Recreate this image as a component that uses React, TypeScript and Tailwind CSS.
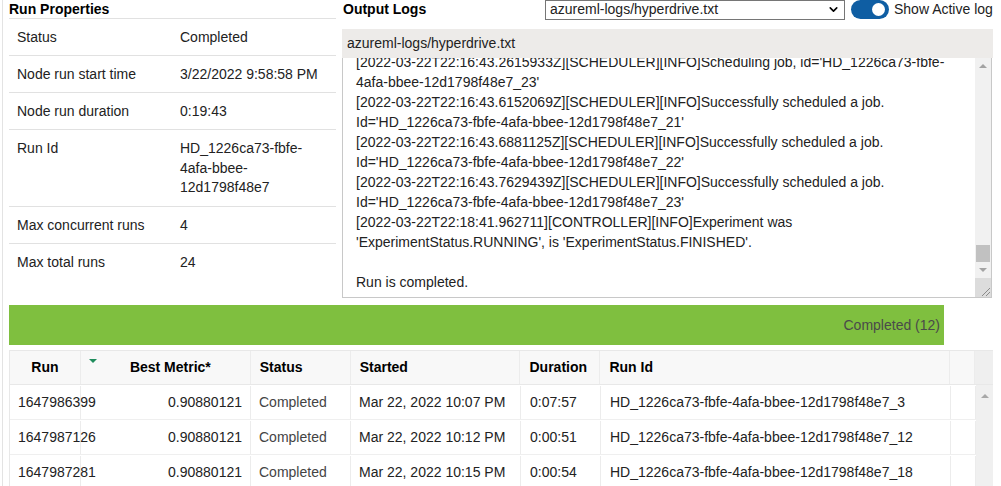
import { ChevronDown } from 'lucide-react'

const props: { label: string; value: string }[] = [
  { label: 'Status', value: 'Completed' },
  { label: 'Node run start time', value: '3/22/2022 9:58:58 PM' },
  { label: 'Node run duration', value: '0:19:43' },
  { label: 'Run Id', value: 'HD_1226ca73-fbfe-4afa-bbee-12d1798f48e7' },
  { label: 'Max concurrent runs', value: '4' },
  { label: 'Max total runs', value: '24' },
]

const logLines = [
  "[2022-03-22T22:16:43.2615933Z][SCHEDULER][INFO]Scheduling job, id='HD_1226ca73-fbfe-",
  "4afa-bbee-12d1798f48e7_23'",
  '[2022-03-22T22:16:43.6152069Z][SCHEDULER][INFO]Successfully scheduled a job.',
  "Id='HD_1226ca73-fbfe-4afa-bbee-12d1798f48e7_21'",
  '[2022-03-22T22:16:43.6881125Z][SCHEDULER][INFO]Successfully scheduled a job.',
  "Id='HD_1226ca73-fbfe-4afa-bbee-12d1798f48e7_22'",
  '[2022-03-22T22:16:43.7629439Z][SCHEDULER][INFO]Successfully scheduled a job.',
  "Id='HD_1226ca73-fbfe-4afa-bbee-12d1798f48e7_23'",
  '[2022-03-22T22:18:41.962711][CONTROLLER][INFO]Experiment was',
  "'ExperimentStatus.RUNNING', is 'ExperimentStatus.FINISHED'.",
  '',
  'Run is completed.',
]

const runs = [
  { run: '1647986399', metric: '0.90880121', status: 'Completed', started: 'Mar 22, 2022 10:07 PM', duration: '0:07:57', id: 'HD_1226ca73-fbfe-4afa-bbee-12d1798f48e7_3' },
  { run: '1647987126', metric: '0.90880121', status: 'Completed', started: 'Mar 22, 2022 10:12 PM', duration: '0:00:51', id: 'HD_1226ca73-fbfe-4afa-bbee-12d1798f48e7_12' },
  { run: '1647987281', metric: '0.90880121', status: 'Completed', started: 'Mar 22, 2022 10:15 PM', duration: '0:00:54', id: 'HD_1226ca73-fbfe-4afa-bbee-12d1798f48e7_18' },
]

function RunProperties() {
  return (
    <div className="w-[327px] shrink-0">
      <div className="h-[19px] leading-[18px] font-bold border-b border-[#e1e1e1] text-black">Run Properties</div>
      {props.map((p) => (
        <div key={p.label} className="flex pt-[9px] pb-[8px] border-b border-[#e1e1e1] last:border-b-0">
          <div className="w-[171px] shrink-0 pl-[8px] leading-[19px]">{p.label}</div>
          <div className={`w-[140px] break-words ${p.label === 'Run Id' ? 'leading-[19.5px]' : 'leading-[19px]'}`}>
            {p.value}
          </div>
        </div>
      ))}
    </div>
  )
}

function OutputLogs() {
  return (
    <div className="ml-[6px] w-[651px] shrink-0">
      {/* toolbar */}
      <div className="flex items-center h-[19px]">
        <div className="w-[203px] font-bold pl-[1px] text-black">Output Logs</div>
        <div className="w-[300px] h-[20px] border border-[#767676] flex items-center justify-between pl-[4px] pr-[4px] bg-white">
          <span>azureml-logs/hyperdrive.txt</span>
          <ChevronDown className="w-[13px] h-[13px] text-black" strokeWidth={3} />
        </div>
        <div className="ml-[6px] w-[38px] h-[19px] rounded-full bg-[#0f5ea3] flex items-center justify-end pr-[4px]">
          <div className="w-[13px] h-[13px] rounded-full bg-white" />
        </div>
        <span className="ml-[5px] whitespace-nowrap">Show Active log</span>
      </div>

      <div className="mt-[10px] h-[29px] bg-[#edebe9] pl-[5px] leading-[29px]">azureml-logs/hyperdrive.txt</div>

      {/* log box, scrolled to the end */}
      <div className="w-[650px] h-[240px] border border-[#c8c8c8] border-t-0 flex overflow-hidden bg-white">
        <div className="flex-1 overflow-hidden pl-[13px]">
          <div className="-mt-[6px]">
            {logLines.map((l, i) => (
              <div key={i} className="h-[20px] leading-[20px] whitespace-nowrap">{l || '\u00a0'}</div>
            ))}
          </div>
        </div>
        <div className="w-[16px] shrink-0 flex flex-col bg-[#f1f1f1]">
          <div className="h-[16px] flex items-center justify-center">
            <div className="w-0 h-0 border-l-[4px] border-r-[4px] border-b-[4px] border-l-transparent border-r-transparent border-b-[#a3a3a3]" />
          </div>
          <div className="flex-1" />
          <div className="h-[17px] mx-[1px] bg-[#c1c1c1]" />
          <div className="h-[16px] flex items-center justify-center">
            <div className="w-0 h-0 border-l-[4px] border-r-[4px] border-t-[4px] border-l-transparent border-r-transparent border-t-[#a3a3a3]" />
          </div>
          <div className="h-[19px] bg-[#dcdcdc] flex items-end justify-end">
            <svg width="12" height="12" viewBox="0 0 12 12">
              <path d="M11 3 L3 11 M11 7 L7 11" stroke="#8a8a8a" strokeWidth="1" />
            </svg>
          </div>
        </div>
      </div>
    </div>
  )
}

function RunsTable() {
  const cell = 'border-r border-[#ececec] flex items-center'
  return (
    <div className="mt-[5px] w-[984px] border-t border-l border-[#e8e8e8]">
      <div className="flex h-[34px] bg-[#f8f8f8] border-b border-[#e8e8e8] font-bold text-black">
        <div className={`${cell} w-[71px] justify-center`}>Run</div>
        <div className={`${cell} w-[170px] justify-center pl-[10px] relative`}>
          <div className="absolute left-[8px] top-[8px] w-0 h-0 border-l-[4px] border-r-[4px] border-t-[4px] border-l-transparent border-r-transparent border-t-[#1f8c5c]" />
          Best Metric*
        </div>
        <div className={`${cell} w-[100px] pl-[9px]`}>Status</div>
        <div className={`${cell} w-[170px] pl-[9px]`}>Started</div>
        <div className={`${cell} w-[80px] pl-[9px]`}>Duration</div>
        <div className={`${cell} w-[350px] pl-[9px]`}>Run Id</div>
        <div className={`${cell} w-[25px]`} />
        <div className="w-[18px] bg-[#efefef]" />
      </div>
      <div className="flex">
        <div className="flex-1">
          {runs.map((r) => (
            <div key={r.run} className="flex h-[35px] border-b border-[#efefef] text-[#222] pt-[1px]">
              <div className={`${cell} w-[71px] pl-[8px] whitespace-nowrap overflow-visible`}>{r.run}</div>
              <div className={`${cell} w-[170px] justify-end pr-[8px]`}>{r.metric}</div>
              <div className={`${cell} w-[100px] pl-[8px] text-[#444]`}>{r.status}</div>
              <div className={`${cell} w-[170px] pl-[8px] whitespace-nowrap`}>{r.started}</div>
              <div className={`${cell} w-[80px] pl-[9px]`}>{r.duration}</div>
              <div className={`${cell} w-[350px] pl-[9px] whitespace-nowrap`}>{r.id}</div>
              <div className={`${cell} w-[25px]`} />
            </div>
          ))}
        </div>
        <div className="w-[18px] bg-[#f0f0f0] flex justify-center pt-[9px]">
          <div className="w-0 h-0 border-l-[4px] border-r-[4px] border-b-[4px] border-l-transparent border-r-transparent border-b-[#a8a8a8]" />
        </div>
      </div>
    </div>
  )
}

export default function App() {
  return (
    <div
      className="h-[486px] overflow-hidden bg-white text-[14px] text-[#222] ml-[2px] border-l border-[#e3e3e3] pl-[6px]"
      style={{ fontFamily: '"Liberation Sans", Arial, sans-serif' }}
    >
      <div className="flex h-[298px]">
        <RunProperties />
        <OutputLogs />
      </div>
      <div className="mt-[7px] w-[935px] h-[40px] bg-[#7fbf3f] flex items-center justify-end pr-[4px] text-[#4a4a4a]">
        Completed (12)
      </div>
      <RunsTable />
    </div>
  )
}
